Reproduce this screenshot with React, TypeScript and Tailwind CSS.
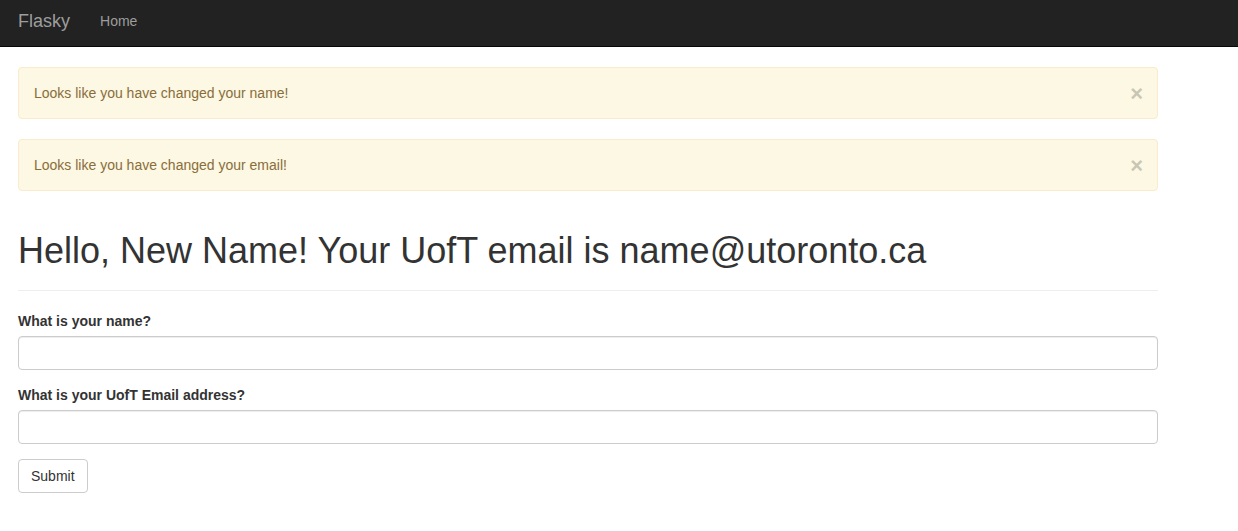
import React from "react";

const font = { fontFamily: '"Liberation Sans", Arial, Helvetica, sans-serif' };

function Alert({ text }: { text: string }) {
  return (
    <div className="relative mb-5 h-[52px] rounded border border-[#faebcc] bg-[#fcf8e3] py-[15px] pl-[15px] pr-[35px] text-sm leading-5 text-[#8a6d3b]">
      {text}
      <button className="absolute right-[14px] top-[16px] text-[22px] font-bold leading-5 text-black opacity-20">
        ×
      </button>
    </div>
  );
}

export default function App() {
  return (
    <div className="min-h-screen bg-white text-sm text-[#333]" style={font}>
      <nav className="flex h-[47px] items-center border-b border-[#080808] bg-[#222] pl-[18px]">
        <a className="mt-[-5px] text-lg text-[#9d9d9d]">Flasky</a>
        <a className="ml-[30px] mt-[-5px] text-sm text-[#9d9d9d]">Home</a>
      </nav>

      <div className="ml-[18px] mt-5 w-[1140px]">
        <Alert text="Looks like you have changed your name!" />
        <Alert text="Looks like you have changed your email!" />

        <div className="mt-10 border-b border-[#eee] pb-[9px]">
          <h1 className="mb-[10px] text-[36px] leading-[39.6px] font-normal text-[#333]">
            Hello, New Name! Your UofT email is name@utoronto.ca
          </h1>
        </div>

        <form className="mt-5">
          <div className="mb-[15px]">
            <label className="mb-[5px] block font-bold leading-5">What is your name?</label>
            <input className="h-[34px] w-full rounded border border-[#ccc] px-3 shadow-[inset_0_1px_1px_rgba(0,0,0,0.075)]" />
          </div>
          <div className="mb-[15px]">
            <label className="mb-[5px] block font-bold leading-5">What is your UofT Email address?</label>
            <input className="h-[34px] w-full rounded border border-[#ccc] px-3 shadow-[inset_0_1px_1px_rgba(0,0,0,0.075)]" />
          </div>
          <button
            type="button"
            className="h-[34px] rounded border border-[#ccc] bg-white px-3 leading-5 text-[#333]"
          >
            Submit
          </button>
        </form>
      </div>
    </div>
  );
}
